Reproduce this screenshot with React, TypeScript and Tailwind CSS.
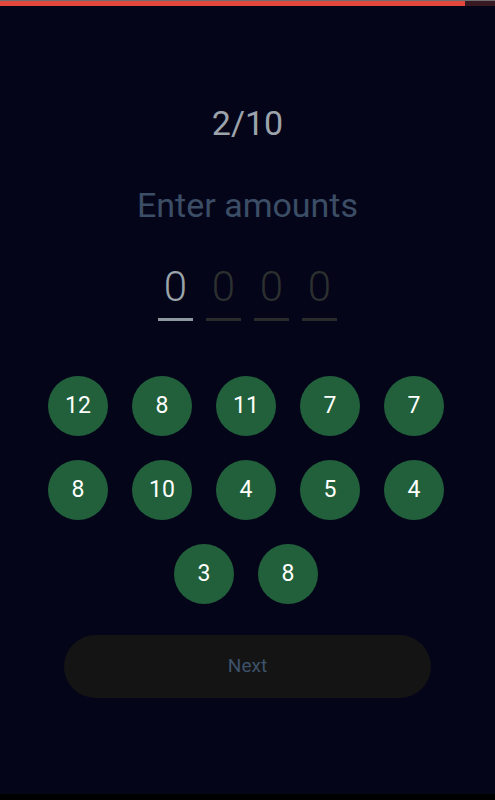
const amounts = [12, 8, 11, 7, 7, 8, 10, 4, 5, 4, 3, 8]

export default function App() {
  return (
    <div
      className="relative w-full h-[800px] bg-[#05051a] flex flex-col items-center overflow-hidden"
      style={{ fontFamily: 'Roboto, "Noto Sans", sans-serif' }}
    >
      <div className="w-full h-px bg-[#6e6e6e]" />
      <div className="w-full h-[5px] bg-[#3a1a22] flex">
        <div className="w-[94%] h-full bg-[#e4473d]" />
      </div>

      <div className="mt-[100px] text-[34px] leading-[34px] text-[#9ca3aa]">2/10</div>
      <div className="mt-[48px] text-[34px] leading-[34px] text-[#3b4e65]">Enter amounts</div>

      <div className="mt-[44px] flex gap-[13px]">
        {[0, 1, 2, 3].map((i) => (
          <div key={i} className="w-[35px] flex flex-col items-center">
            <div
              className={`text-[42px] leading-[42px] font-light ${i === 0 ? 'text-[#9aa4a9]' : 'text-[#2c302f]'}`}
            >
              0
            </div>
            <div className={`mt-[10px] w-full h-[3px] ${i === 0 ? 'bg-[#8e999f]' : 'bg-[#292b2c]'}`} />
          </div>
        ))}
      </div>

      <div className="mt-[55px] mr-[3px] w-[396px] flex flex-wrap justify-center gap-6">
        {amounts.map((n, i) => (
          <button
            key={i}
            className="size-[60px] rounded-full bg-[#21603a] text-white text-[23px] flex items-center justify-center"
          >
            {n}
          </button>
        ))}
      </div>

      <button className="mt-[31px] w-[367px] h-[63px] rounded-full bg-[#141414] text-[19px] text-[#3d526b]">
        Next
      </button>

      <div className="absolute bottom-0 left-0 w-full h-[6px] bg-black" />
    </div>
  )
}
